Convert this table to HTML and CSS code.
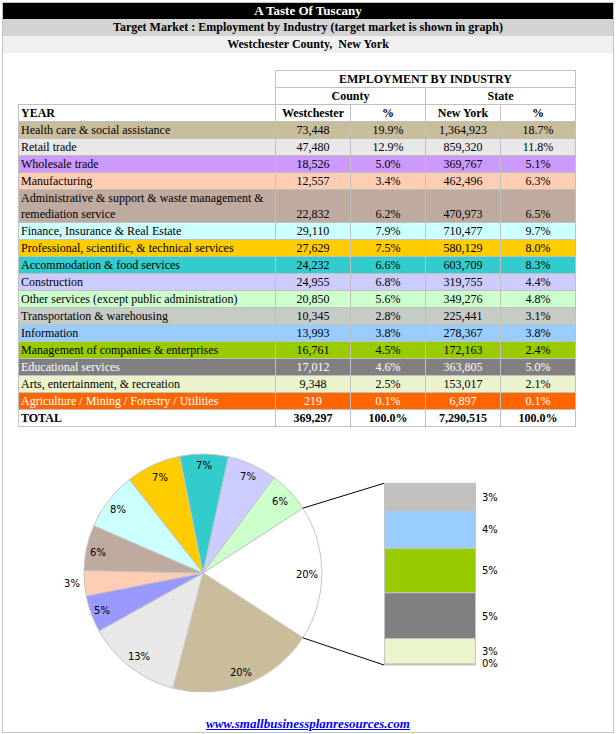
FILE: index.html
```html
<!DOCTYPE html>
<html>
<head>
<meta charset="utf-8">
<title>A Taste Of Tuscany</title>
<link rel="stylesheet" href="styles.css">
</head>
<body>
<div class="frame">
  <div class="bar bar-title">A Taste Of Tuscany</div>
  <div class="bar bar-sub">Target Market : Employment by Industry (target market is shown in graph)</div>
  <div class="bar bar-loc">Westchester County,&nbsp; New York</div>

  <table class="emp">
    <colgroup>
      <col class="c-label"><col class="c-num"><col class="c-num"><col class="c-num"><col class="c-num">
    </colgroup>
    <tr><td class="blank"></td><th colspan="4">EMPLOYMENT BY INDUSTRY</th></tr>
    <tr><td class="blank"></td><th colspan="2">County</th><th colspan="2">State</th></tr>
    <tr><th class="lbl">YEAR</th><th>Westchester</th><th>%</th><th>New York</th><th>%</th></tr>
    <tr class="r-health"><td class="lbl">Health care &amp; social assistance</td><td>73,448</td><td>19.9%</td><td>1,364,923</td><td>18.7%</td></tr>
    <tr class="r-retail"><td class="lbl">Retail trade</td><td>47,480</td><td>12.9%</td><td>859,320</td><td>11.8%</td></tr>
    <tr class="r-whole"><td class="lbl">Wholesale trade</td><td>18,526</td><td>5.0%</td><td>369,767</td><td>5.1%</td></tr>
    <tr class="r-manuf"><td class="lbl">Manufacturing</td><td>12,557</td><td>3.4%</td><td>462,496</td><td>6.3%</td></tr>
    <tr class="r-admin"><td class="lbl">Administrative &amp; support &amp; waste management &amp; remediation service</td><td>22,832</td><td>6.2%</td><td>470,973</td><td>6.5%</td></tr>
    <tr class="r-fin"><td class="lbl">Finance, Insurance &amp; Real Estate</td><td>29,110</td><td>7.9%</td><td>710,477</td><td>9.7%</td></tr>
    <tr class="r-prof"><td class="lbl">Professional, scientific, &amp; technical services</td><td>27,629</td><td>7.5%</td><td>580,129</td><td>8.0%</td></tr>
    <tr class="r-accom"><td class="lbl">Accommodation &amp; food services</td><td>24,232</td><td>6.6%</td><td>603,709</td><td>8.3%</td></tr>
    <tr class="r-constr"><td class="lbl">Construction</td><td>24,955</td><td>6.8%</td><td>319,755</td><td>4.4%</td></tr>
    <tr class="r-other"><td class="lbl">Other services (except public administration)</td><td>20,850</td><td>5.6%</td><td>349,276</td><td>4.8%</td></tr>
    <tr class="r-trans"><td class="lbl">Transportation &amp; warehousing</td><td>10,345</td><td>2.8%</td><td>225,441</td><td>3.1%</td></tr>
    <tr class="r-info"><td class="lbl">Information</td><td>13,993</td><td>3.8%</td><td>278,367</td><td>3.8%</td></tr>
    <tr class="r-mgmt"><td class="lbl">Management of companies &amp; enterprises</td><td>16,761</td><td>4.5%</td><td>172,163</td><td>2.4%</td></tr>
    <tr class="r-edu"><td class="lbl">Educational services</td><td>17,012</td><td>4.6%</td><td>363,805</td><td>5.0%</td></tr>
    <tr class="r-arts"><td class="lbl">Arts, entertainment, &amp; recreation</td><td>9,348</td><td>2.5%</td><td>153,017</td><td>2.1%</td></tr>
    <tr class="r-agri"><td class="lbl">Agriculture / Mining / Forestry / Utilities</td><td>219</td><td>0.1%</td><td>6,897</td><td>0.1%</td></tr>
    <tr class="r-total"><td class="lbl">TOTAL</td><td>369,297</td><td>100.0%</td><td>7,290,515</td><td>100.0%</td></tr>
  </table>

  <svg class="chart" width="610" height="289" viewBox="3 427 610 289" xmlns="http://www.w3.org/2000/svg">
    <g class="slices">
      <path fill="#ffffff" d="M203 573 L302.82 508.19 A119 119 0 0 1 302.82 637.81 Z"/>
      <path fill="#c9bd9c" d="M203 573 L302.82 637.81 A119 119 0 0 1 173.02 688.17 Z"/>
      <path fill="#e8e8e8" d="M203 573 L173.02 688.17 A119 119 0 0 1 99.05 630.93 Z"/>
      <path fill="#9999ff" d="M203 573 L99.05 630.93 A119 119 0 0 1 86.21 595.85 Z"/>
      <path fill="#ffccb4" d="M203 573 L86.21 595.85 A119 119 0 0 1 84.02 570.57 Z"/>
      <path fill="#bfaaa0" d="M203 573 L84.02 570.57 A119 119 0 0 1 93.82 525.67 Z"/>
      <path fill="#ccffff" d="M203 573 L93.82 525.67 A119 119 0 0 1 129.43 479.47 Z"/>
      <path fill="#ffcc00" d="M203 573 L129.43 479.47 A119 119 0 0 1 179.76 456.30 Z"/>
      <path fill="#33cccc" d="M203 573 L179.76 456.30 A119 119 0 0 1 228.47 456.76 Z"/>
      <path fill="#ccccff" d="M203 573 L228.47 456.76 A119 119 0 0 1 274.13 477.60 Z"/>
      <path fill="#ccffcc" d="M203 573 L274.13 477.60 A119 119 0 0 1 302.82 508.19 Z"/>
    </g>
    <g class="links">
      <line x1="302.8" y1="508.2" x2="384" y2="483.3"/>
      <line x1="302.8" y1="637.8" x2="384" y2="665"/>
    </g>
    <g class="stack">
      <rect fill="#c0c0c0" x="384.5" y="483.3" width="91" height="27.6"/>
      <rect fill="#99ccff" x="384.5" y="510.9" width="91" height="37.7"/>
      <rect fill="#99cc00" x="384.5" y="548.6" width="91" height="44.2"/>
      <rect fill="#808080" x="384.5" y="592.8" width="91" height="45.8"/>
      <rect fill="#ebf5cc" x="384.5" y="638.6" width="91" height="25.4"/>
      <rect fill="#ff9966" x="384.5" y="664" width="91" height="1"/>
    </g>
    <g class="plabels">
      <text x="204" y="465">7%</text>
      <text x="160" y="477">7%</text>
      <text x="248" y="476">7%</text>
      <text x="280" y="501">6%</text>
      <text x="118" y="509">8%</text>
      <text x="98" y="552">6%</text>
      <text x="72" y="583">3%</text>
      <text x="102" y="610">5%</text>
      <text x="139" y="656">13%</text>
      <text x="241" y="672">20%</text>
      <text x="307" y="574">20%</text>
    </g>
    <g class="blabels">
      <text x="482" y="497">3%</text>
      <text x="482" y="529">4%</text>
      <text x="482" y="570">5%</text>
      <text x="482" y="616">5%</text>
      <text x="482" y="651">3%</text>
      <text x="482" y="663">0%</text>
    </g>
  </svg>

  <div class="foot"><a class="site" href="#">www.smallbusinessplanresources.com</a></div>
</div>
</body>
</html>
```
FILE: styles.css
```css
body {
  margin: 0;
  background: #ffffff;
  font-family: "Liberation Serif", "Times New Roman", serif;
  font-size: 12px;
  color: #000000;
}

.frame {
  margin: 2px 0 0 2px;
  width: 610px;
  border: 1px solid #c4c4c4;
}

.bar {
  text-align: center;
  font-weight: bold;
}

.bar-title {
  background: #000000;
  color: #ffffff;
  font-size: 13px;
  line-height: 16px;
}

.bar-sub {
  background: #d4d4d4;
  line-height: 17px;
}

.bar-loc {
  background: #f0f0f0;
  line-height: 17px;
}

.emp {
  margin: 17px 0 0 15px;
  border-collapse: collapse;
  table-layout: fixed;
  width: 558px;
}

.c-num {
  width: 75px;
}

.emp td,
.emp th {
  border: 1px solid #c0c0c0;
  padding: 0 2px;
  line-height: 16px;
  height: 16px;
  vertical-align: bottom;
  text-align: center;
  font-weight: normal;
}

.emp th {
  font-weight: bold;
}

.emp .lbl {
  text-align: left;
}

.emp .blank {
  border: none;
}

.r-health { background: #c9bd9c; }
.r-retail { background: #e8e8e8; }
.r-whole { background: #cc99ff; }
.r-manuf { background: #ffcdb4; }
.r-admin { background: #bfaaa0; }
.r-fin { background: #ccffff; }
.r-prof { background: #ffcc00; }
.r-accom { background: #33cccc; }
.r-constr { background: #ccccff; }
.r-other { background: #ccffcc; }
.r-trans { background: #c5cbc5; }
.r-info { background: #99ccff; }
.r-mgmt { background: #99cc00; }
.r-edu { background: #808080; color: #ffffff; }
.r-arts { background: #ebf3cc; }
.r-agri { background: #ff6600; color: #ffffff; }
.r-total { background: #ffffff; }
.emp .r-total td { font-weight: bold; }

.chart {
  display: block;
}

.slices path {
  stroke: #c4c4c4;
  stroke-width: 1;
}

.links line {
  stroke: #000000;
  stroke-width: 1;
}

.stack rect {
  stroke: #c4c4c4;
  stroke-width: 1;
}

.plabels text,
.blabels text {
  font-family: "DejaVu Sans", Verdana, sans-serif;
  font-size: 10px;
  fill: #000000;
  dominant-baseline: central;
}

.plabels text {
  text-anchor: middle;
}

.foot {
  text-align: center;
  line-height: 15px;
}

.site {
  color: #0000ff;
  font-weight: bold;
  font-style: italic;
  font-size: 13px;
  text-decoration: underline;
}
```
